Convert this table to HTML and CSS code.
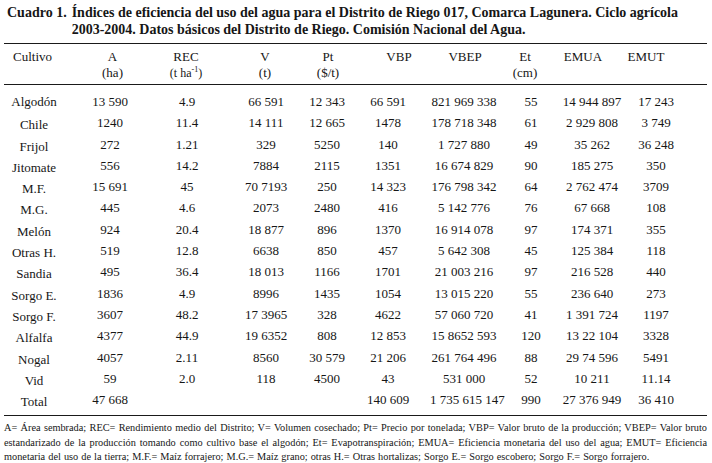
FILE: index.html
```html
<!DOCTYPE html>
<html lang="es">
<head>
<meta charset="utf-8">
<title>Cuadro 1</title>
<link rel="stylesheet" href="styles.css">
</head>
<body>
<div class="page">
  <div class="caption">
    <span class="cap-label">Cuadro 1.</span>
    <span class="cap-text">Índices de eficiencia del uso del agua para el Distrito de Riego 017, Comarca Lagunera. Ciclo agrícola 2003-2004. Datos básicos del Distrito de Riego. Comisión Nacional del Agua.</span>
  </div>
  <table class="tbl">
    <colgroup>
      <col class="w1"><col class="w2"><col class="w3"><col class="w4"><col class="w5">
      <col class="w6"><col class="w7"><col class="w8"><col class="w9"><col class="w10">
    </colgroup>
    <thead>
      <tr>
        <th class="h1">Cultivo<br>&nbsp;</th>
        <th class="h2">A<br>(ha)</th>
        <th class="h3">REC<br><span class="unit-sm">(t ha<sup>-1</sup>)</span></th>
        <th class="h4">V<br>(t)</th>
        <th class="h5">Pt<br>($/t)</th>
        <th class="h6">VBP<br>&nbsp;</th>
        <th class="h7">VBEP<br>&nbsp;</th>
        <th class="h8">Et<br>(cm)</th>
        <th class="h9">EMUA<br>&nbsp;</th>
        <th class="h10">EMUT<br>&nbsp;</th>
      </tr>
    </thead>
    <tbody>
      <tr class="first"><td>Algodón</td><td>13 590</td><td>4.9</td><td>66 591</td><td>12 343</td><td>66 591</td><td>821 969 338</td><td>55</td><td>14 944 897</td><td>17 243</td></tr>
      <tr><td class="low">Chile</td><td>1240</td><td>11.4</td><td>14 111</td><td>12 665</td><td>1478</td><td>178 718 348</td><td>61</td><td>2 929 808</td><td>3 749</td></tr>
      <tr><td class="low">Frijol</td><td>272</td><td>1.21</td><td>329</td><td>5250</td><td>140</td><td>1 727 880</td><td>49</td><td>35 262</td><td>36 248</td></tr>
      <tr><td class="low">Jitomate</td><td>556</td><td>14.2</td><td>7884</td><td>2115</td><td>1351</td><td>16 674 829</td><td>90</td><td>185 275</td><td>350</td></tr>
      <tr><td class="low">M.F.</td><td>15 691</td><td>45</td><td>70 7193</td><td>250</td><td>14 323</td><td>176 798 342</td><td>64</td><td>2 762 474</td><td>3709</td></tr>
      <tr><td class="low">M.G.</td><td>445</td><td>4.6</td><td>2073</td><td>2480</td><td>416</td><td>5 142 776</td><td>76</td><td>67 668</td><td>108</td></tr>
      <tr><td class="low">Melón</td><td>924</td><td>20.4</td><td>18 877</td><td>896</td><td>1370</td><td>16 914 078</td><td>97</td><td>174 371</td><td>355</td></tr>
      <tr><td class="low">Otras H.</td><td>519</td><td>12.8</td><td>6638</td><td>850</td><td>457</td><td>5 642 308</td><td>45</td><td>125 384</td><td>118</td></tr>
      <tr><td class="low">Sandia</td><td>495</td><td>36.4</td><td>18 013</td><td>1166</td><td>1701</td><td>21 003 216</td><td>97</td><td>216 528</td><td>440</td></tr>
      <tr><td class="low">Sorgo E.</td><td>1836</td><td>4.9</td><td>8996</td><td>1435</td><td>1054</td><td>13 015 220</td><td>55</td><td>236 640</td><td>273</td></tr>
      <tr><td class="low">Sorgo F.</td><td>3607</td><td>48.2</td><td>17 3965</td><td>328</td><td>4622</td><td>57 060 720</td><td>41</td><td>1 391 724</td><td>1197</td></tr>
      <tr><td class="low">Alfalfa</td><td>4377</td><td>44.9</td><td>19 6352</td><td>808</td><td>12 853</td><td>15 8652 593</td><td>120</td><td>13 22 104</td><td>3328</td></tr>
      <tr><td class="low">Nogal</td><td>4057</td><td>2.11</td><td>8560</td><td>30 579</td><td>21 206</td><td>261 764 496</td><td>88</td><td>29 74 596</td><td>5491</td></tr>
      <tr><td class="low">Vid</td><td>59</td><td>2.0</td><td>118</td><td>4500</td><td>43</td><td>531 000</td><td>52</td><td>10 211</td><td>11.14</td></tr>
      <tr class="last"><td class="low">Total</td><td>47 668</td><td></td><td></td><td></td><td>140 609</td><td>1 735 615 147</td><td>990</td><td>27 376 949</td><td>36 410</td></tr>
    </tbody>
  </table>
  <div class="notes">
    <span class="line just">A= Área sembrada; REC= Rendimiento medio del Distrito; V= Volumen cosechado; Pt= Precio por tonelada; VBP= Valor bruto de la producción; VBEP= Valor bruto</span>
    <span class="line just">estandarizado de la producción tomando como cultivo base el algodón; Et= Evapotranspiración; EMUA= Eficiencia monetaria del uso del agua; EMUT= Eficiencia</span>
    <span class="line last-line">monetaria del uso de la tierra; M.F.= Maíz forrajero; M.G.= Maíz grano; otras H.= Otras hortalizas; Sorgo E.= Sorgo escobero; Sorgo F.= Sorgo forrajero.</span>
  </div>
</div>
</body>
</html>
```

FILE: styles.css
```css
html, body {
  margin: 0;
  padding: 0;
  background: #ffffff;
}

body {
  font-family: "Liberation Serif", "Times New Roman", serif;
  color: #161616;
}

.page {
  width: 703px;
  margin-left: 4px;
}

.caption {
  display: flex;
  gap: 5px;
  padding: 4px 0 0 3px;
  font-weight: bold;
  font-size: 14px;
  line-height: 17px;
  height: 43px;
  box-sizing: border-box;
}

.cap-label {
  flex: none;
  white-space: nowrap;
}

.cap-text {
  flex: 1;
}

.tbl {
  width: 703px;
  table-layout: fixed;
  border-collapse: collapse;
  font-size: 13px;
  margin-top: 0;
}

.w1 { width: 68px; }
.w2 { width: 76px; }
.w3 { width: 78px; }
.w4 { width: 70px; }
.w5 { width: 62px; }
.w6 { width: 68px; }
.w7 { width: 72px; }
.w8 { width: 64px; }
.w9 { width: 62px; }
.w10 { width: 83px; }

.tbl thead tr {
  border-top: 1px solid #1a1a1a;
  border-bottom: 1px solid #1a1a1a;
}

.tbl th {
  font-weight: normal;
  line-height: 15.5px;
  padding: 5px 0 3px 0;
  text-align: center;
  vertical-align: top;
  white-space: nowrap;
}

.tbl th.h1 { text-align: left; padding-left: 9px; }
.tbl th.h2 { padding-left: 5px; }
.tbl th.h3 { padding-right: 2px; }
.tbl th.h4 { padding-left: 8px; }
.tbl th.h5 { padding-left: 2px; }
.tbl th.h6 { padding-left: 14px; }
.tbl th.h7 { padding-left: 6px; }
.tbl th.h8 { padding-right: 10px; }
.tbl th.h9 { padding-right: 20px; }
.tbl th.h10 { padding-right: 39px; }

.unit-sm {
  font-size: 12px;
}

.unit-sm sup {
  font-size: 8px;
  line-height: 0;
  vertical-align: 5px;
}

.tbl td {
  line-height: 21.3px;
  padding: 0;
  text-align: center;
  vertical-align: top;
  white-space: nowrap;
}

.tbl td:nth-child(1) { padding-right: 8px; }
.tbl td:nth-child(4) { padding-left: 10px; }
.tbl td:nth-child(6) { padding-right: 8px; }
.tbl td:nth-child(7) { padding-left: 4px; }
.tbl td:nth-child(8) { padding-left: 2px; }
.tbl td:nth-child(9) { padding-right: 2px; }
.tbl td:nth-child(10) { padding-right: 19px; }

.tbl td.low {
  padding-top: 4px;
  line-height: 17.3px;
}

.tbl tr.first td {
  padding-top: 6px;
}

.tbl tr.last td {
  padding-bottom: 5px;
}

.tbl tr.last td.low {
  padding-top: 4px;
}

.notes {
  border-top: 1px solid #1a1a1a;
  padding-top: 5px;
  font-size: 10.3px;
  line-height: 14.3px;
}

.notes .line {
  display: block;
  white-space: nowrap;
}

.notes .line.just {
  white-space: normal;
  text-align: justify;
  text-align-last: justify;
}

.notes .last-line {
  word-spacing: 0.5px;
}
```
